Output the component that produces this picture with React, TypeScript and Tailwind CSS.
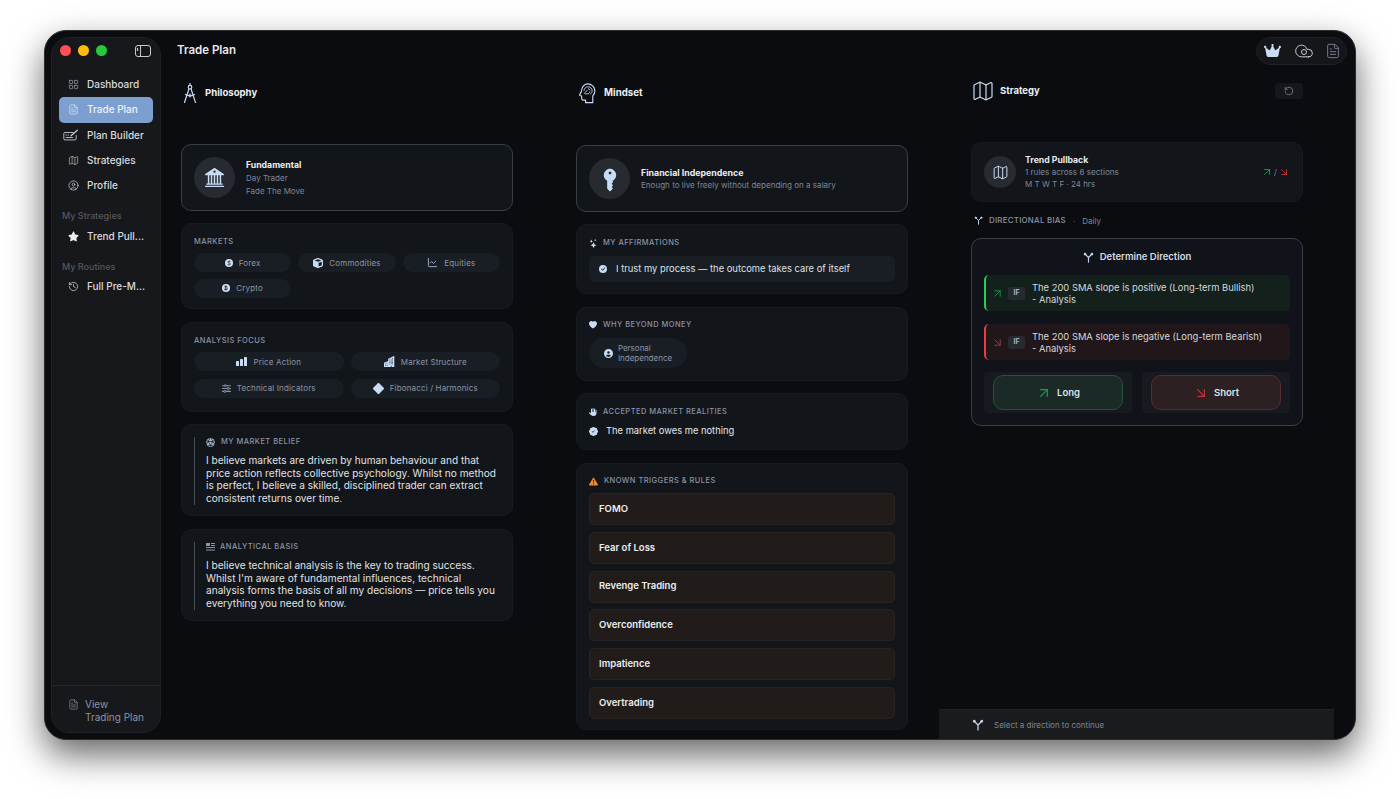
import { ReactNode } from 'react';
import {
  ArrowDownRight,
  ArrowUpRight,
  ChartLine,
  CircleUser,
  Cloud,
  FileText,
  History,
  LayoutGrid,
  Map as MapIcon,
  RotateCcw,
} from 'lucide-react';
import {
  BsBank2,
  BsBuildingsFill,
  BsCheckCircleFill,
  BsCurrencyBitcoin,
  BsCurrencyDollar,
  BsDiamondFill,
  BsExclamationTriangleFill,
  BsHeartFill,
  BsPatchCheckFill,
  BsStars,
} from 'react-icons/bs';
import { FaCircleUser, FaCrown, FaCube, FaDiceD20, FaHand, FaKey, FaSliders, FaStar } from 'react-icons/fa6';

const ICE = '#c9dcf5';

const BranchIcon = ({ size = 12, color = '#c3d2e6' }: { size?: number; color?: string }) => (
  <svg width={size} height={size} viewBox="0 0 24 24" fill="none" stroke={color} strokeWidth="2.6" strokeLinecap="round">
    <path d="M12 22V12M12 12L5 5M12 12l7-7" />
    <circle cx="4.5" cy="4.5" r="1.6" fill={color} />
    <circle cx="19.5" cy="4.5" r="1.6" fill={color} />
  </svg>
);

const CompassIcon = () => (
  <svg width="14" height="20" viewBox="0 0 14 20" fill="none" stroke={ICE} strokeWidth="1.2" strokeLinecap="round" strokeLinejoin="round">
    <path d="M7 0.5v2" />
    <circle cx="7" cy="4.2" r="1.8" />
    <path d="M6 5.8L1.5 19.5M8 5.8l4.5 13.8" />
    <path d="M6.3 11v3M7.7 11v3" strokeWidth="0.8" />
    <path d="M2.5 11.5c2.5 1.5 6.5 1.5 9 0" />
  </svg>
);

const HeadIcon = () => (
  <svg width="18" height="21" viewBox="0 0 20 24" fill="none" stroke={ICE} strokeWidth="1.3" strokeLinecap="round" strokeLinejoin="round">
    <path d="M10.5 1C15.5 1 19 4.4 19 9c0 2.7-1.2 4.2-2.4 5.7V22.5H8.4v-3H5.8c-1.2 0-1.9-.8-1.9-1.9v-2.7L2 14.3c-.5-.2-.6-.6-.4-1l2-3.4C3.8 5 6.6 1 10.5 1z" />
    <path d="M6.5 8.5c.3-2.5 2.4-4.3 4.7-4.2 2.6.1 4.9 2 4.7 4.8-.1 1.5-.8 2.6-1.8 3.4M8 10.5c1-.2 1.8-1 2-2M10.5 12.5c1.4 0 2.5-.9 2.7-2.3M11.5 6.5c.9.2 1.6.8 1.8 1.6M6.7 11.5c.8.8 1.8 1.2 2.8 1" strokeWidth="1" />
  </svg>
);

const PlanBuilderIcon = () => (
  <svg width="16" height="13" viewBox="0 0 16 13" fill="none" stroke="#c4c7cc" strokeWidth="0.9" strokeLinecap="round" strokeLinejoin="round">
    <path d="M10 3.5H2a1.2 1.2 0 0 0-1.2 1.2v5A1.2 1.2 0 0 0 2 10.9h10a1.2 1.2 0 0 0 1.2-1.2V6.5" />
    <path d="M3 6h.5M5 6h.5M3 8.5h6.5" />
    <path d="M8 6.8l6.3-5.6" strokeWidth="1.3" />
  </svg>
);

const BasisIcon = () => (
  <svg width="9" height="8" viewBox="0 0 9 8" fill="#8c95a5">
    <rect x="0" y="0" width="4" height="3" />
    <rect x="5" y="0" width="4" height="1" />
    <rect x="5" y="2" width="4" height="1" />
    <rect x="0" y="4" width="9" height="1" />
    <rect x="0" y="6.5" width="9" height="1" />
  </svg>
);

const BarsIcon = () => (
  <svg width="11" height="9" viewBox="0 0 11 9" fill={ICE}>
    <rect x="0" y="4" width="3" height="5" rx="0.5" />
    <rect x="4" y="2" width="3" height="7" rx="0.5" />
    <rect x="8" y="0" width="3" height="9" rx="0.5" />
  </svg>
);

const CoinIcon = ({ children }: { children: ReactNode }) => (
  <span className="flex h-[8px] w-[8px] items-center justify-center rounded-full bg-[#cfe0f7] text-[#1a1e25]">{children}</span>
);

const Card = ({ children, className = '' }: { children: ReactNode; className?: string }) => (
  <div className={`rounded-[10px] border border-[#171a1f] bg-[#12151a] ${className}`}>{children}</div>
);

const Label = ({ children, className = '' }: { children: ReactNode; className?: string }) => (
  <div className={`text-[7.5px] font-medium uppercase leading-[10px] tracking-[0.45px] text-[#8b93a5] ${className}`}>{children}</div>
);

const Pill = ({ icon, text, className = '' }: { icon: ReactNode; text: string; className?: string }) => (
  <div className={`flex h-[19px] items-center justify-center gap-[6px] rounded-full bg-[#191d24] text-[8px] tracking-[0.15px] text-[#8d95a5] ${className}`}>
    {icon}
    <span>{text}</span>
  </div>
);

const NavItem = ({ icon, text, active = false }: { icon: ReactNode; text: string; active?: boolean }) => (
  <div className={`mx-[7px] flex h-[25.25px] items-center gap-[8px] rounded-[5px] text-[10px] font-medium ${active ? 'bg-[#7c9fd0] text-[#eef3fa]' : 'text-[#d9dbdf]'}`}>
    <span className="flex w-[20px] justify-end">{icon}</span>
    <span>{text}</span>
  </div>
);

const Sidebar = () => (
  <aside className="mb-[6px] ml-[6px] mt-[6px] flex w-[110px] flex-col rounded-[18px] border border-[#1f2124] bg-[#17181b]">
    <div className="flex h-[25px] items-center pl-[8px] pr-[9px]">
      <div className="h-[11px] w-[11px] rounded-full bg-[#ff4f57]" />
      <div className="ml-[7px] h-[11px] w-[11px] rounded-full bg-[#fdbc0f]" />
      <div className="ml-[7px] h-[11px] w-[11px] rounded-full bg-[#28c840]" />
      <svg className="ml-auto" width="16" height="12" viewBox="0 0 16 12" fill="none" stroke="#c9cbcf" strokeWidth="1">
        <rect x="0.5" y="0.5" width="15" height="11" rx="2.5" />
        <path d="M5.5 0.5v11" />
        <path d="M2.5 3v3" strokeWidth="1.2" />
      </svg>
    </div>
    <div className="mt-[9px] flex flex-col">
      <NavItem icon={<LayoutGrid size={11} strokeWidth={1.3} color="#b5b8bd" />} text="Dashboard" />
      <NavItem active icon={<FileText size={11} strokeWidth={1.4} color="#e4ecf7" />} text="Trade Plan" />
      <NavItem icon={<PlanBuilderIcon />} text="Plan Builder" />
      <NavItem icon={<MapIcon size={11} strokeWidth={1.4} color="#c4c7cc" />} text="Strategies" />
      <NavItem icon={<CircleUser size={11} strokeWidth={1.5} color="#d4d6da" />} text="Profile" />
    </div>
    <div className="ml-[10px] mt-[13px] text-[9px] font-medium leading-[10px] text-[#54575c]">My Strategies</div>
    <div className="mt-[3px]">
      <NavItem icon={<FaStar size={11} color="#eceef1" />} text="Trend Pull..." />
    </div>
    <div className="ml-[10px] mt-[12px] text-[9px] font-medium leading-[10px] text-[#54575c]">My Routines</div>
    <div className="mt-[2px]">
      <NavItem icon={<History size={11} strokeWidth={1.6} color="#d4d6da" />} text="Full Pre-M..." />
    </div>
    <div className="mt-auto flex h-[47px] gap-[6px] border-t border-[#26282b] pl-[16px] pt-[12px]">
      <FileText size={11} strokeWidth={1.3} color="#98a2b4" className="mt-[1px]" />
      <div className="text-[10px] leading-[13px] text-[#8c95a6]">
        View
        <br />
        Trading Plan
      </div>
    </div>
  </aside>
);

const Belief = ({ icon, title, gap, children }: { icon: ReactNode; title: string; gap: string; children: ReactNode }) => (
  <Card className="px-[12px] pb-[10px] pt-[12px]">
    <div className="flex border-l border-[#474c55] pl-[11px]">
      <div>
        <div className={`flex h-[10px] items-center ${gap}`}>
          {icon}
          <Label>{title}</Label>
        </div>
        <p className="mt-[7px] text-[10.1px] font-normal leading-[12.7px] text-[#e0e2e6]">{children}</p>
      </div>
    </div>
  </Card>
);

const PhilosophyColumn = () => (
  <div className="ml-[20px] w-[332px]">
    <div className="mt-[16px] flex h-[24px] items-center">
      <span className="ml-[2px]"><CompassIcon /></span>
      <span className="ml-[8px] text-[9.6px] font-bold text-[#eceef1]">Philosophy</span>
    </div>
    <div className="mt-[39px] flex h-[67px] items-center gap-[11px] rounded-[10px] border border-[#3a3f47] bg-[#12151a] pl-[12px]">
      <div className="flex h-[41px] w-[41px] items-center justify-center rounded-full bg-[#272a30]">
        <BsBank2 size={19} color={ICE} />
      </div>
      <div className="pt-[1px]">
        <div className="text-[8.7px] font-bold leading-[13px] text-[#eceef1]">Fundamental</div>
        <div className="text-[8px] leading-[13px] text-[#7e8697]">Day Trader</div>
        <div className="text-[8px] leading-[13px] text-[#7e8697]">Fade The Move</div>
      </div>
    </div>
    <Card className="mt-[12px] h-[86px] px-[12px] pt-[13px]">
      <Label>Markets</Label>
      <div className="mt-[6px] grid grid-cols-3 gap-x-[7px] gap-y-[6.5px]">
        <Pill icon={<CoinIcon><BsCurrencyDollar size={6} /></CoinIcon>} text="Forex" />
        <Pill icon={<FaCube size={10} color={ICE} />} text="Commodities" />
        <Pill icon={<ChartLine size={11} strokeWidth={1.6} color={ICE} />} text="Equities" />
        <Pill icon={<CoinIcon><BsCurrencyBitcoin size={6} /></CoinIcon>} text="Crypto" />
      </div>
    </Card>
    <Card className="mt-[13px] h-[90px] px-[12px] pt-[13px]">
      <Label>Analysis Focus</Label>
      <div className="mt-[6px] grid grid-cols-2 gap-x-[7px] gap-y-[7.5px]">
        <Pill icon={<BarsIcon />} text="Price Action" />
        <Pill icon={<BsBuildingsFill size={11} color={ICE} />} text="Market Structure" />
        <Pill icon={<FaSliders size={9} color="#8c95a5" />} text="Technical Indicators" />
        <Pill icon={<BsDiamondFill size={11} color={ICE} />} text="Fibonacci / Harmonics" />
      </div>
    </Card>
    <div className="mt-[12px]">
      <Belief icon={<FaDiceD20 size={9} color="#a9b8cf" />} gap="gap-[6px]" title="My Market Belief">
        I believe markets are driven by human behaviour and that price action reflects collective psychology. Whilst no
        method is perfect, I believe a skilled, disciplined trader can extract consistent returns over time.
      </Belief>
    </div>
    <div className="mt-[13px]">
      <Belief icon={<BasisIcon />} gap="gap-[5px]" title="Analytical Basis">
        I believe technical analysis is the key to trading success. Whilst I'm aware of fundamental influences, technical
        analysis forms the basis of all my decisions — price tells you everything you need to know.
      </Belief>
    </div>
  </div>
);

const triggers = ['FOMO', 'Fear of Loss', 'Revenge Trading', 'Overconfidence', 'Impatience', 'Overtrading'];

const MindsetColumn = () => (
  <div className="ml-[63px] w-[332px]">
    <div className="mt-[16px] flex h-[24px] items-center">
      <span className="ml-[2px]"><HeadIcon /></span>
      <span className="ml-[8px] text-[9.7px] font-bold text-[#eceef1]">Mindset</span>
    </div>
    <div className="mt-[40px] flex h-[67px] items-center gap-[11px] rounded-[10px] border border-[#3a3f47] bg-[#12151a] pl-[12px]">
      <div className="flex h-[41px] w-[41px] items-center justify-center rounded-full bg-[#272a30]">
        <FaKey size={18} color={ICE} className="rotate-[-45deg]" />
      </div>
      <div>
        <div className="text-[8.8px] font-bold leading-[13px] text-[#eceef1]">Financial Independence</div>
        <div className="text-[8.05px] leading-[13px] text-[#7e8697]">Enough to live freely without depending on a salary</div>
      </div>
    </div>
    <Card className="mt-[12px] h-[70px] px-[12px] pt-[13px]">
      <div className="flex items-center gap-[5px]">
        <BsStars size={9} color={ICE} />
        <Label>My Affirmations</Label>
      </div>
      <div className="mt-[8px] flex h-[26px] items-center gap-[9px] rounded-[6px] bg-[#191d24] pl-[10px] text-[9.4px] text-[#dfe1e5]">
        <BsCheckCircleFill size={8} color={ICE} />
        <span>I trust my process — the outcome takes care of itself</span>
      </div>
    </Card>
    <Card className="mt-[13px] h-[74px] px-[12px] pt-[12px]">
      <div className="flex items-center gap-[6px]">
        <BsHeartFill size={8} color={ICE} />
        <Label>Why Beyond Money</Label>
      </div>
      <div className="mt-[8px] flex h-[30px] w-[98px] items-center justify-center gap-[5px] rounded-full bg-[#191d24] text-[8px] leading-[10px] text-[#8d95a5]">
        <FaCircleUser size={9} color={ICE} />
        <span>
          Personal
          <br />
          Independence
        </span>
      </div>
    </Card>
    <Card className="mt-[12px] h-[57px] px-[12px] pt-[13px]">
      <div className="flex items-center gap-[6px]">
        <FaHand size={8} color={ICE} />
        <Label>Accepted Market Realities</Label>
      </div>
      <div className="mt-[7px] flex items-center gap-[8px] text-[9.35px] text-[#e6e8eb]">
        <BsPatchCheckFill size={9} color={ICE} />
        <span>The market owes me nothing</span>
      </div>
    </Card>
    <Card className="mt-[13px] h-[267px] px-[12px] pt-[12px]">
      <div className="flex items-center gap-[6px]">
        <BsExclamationTriangleFill size={9} color="#f08a2c" />
        <Label>Known Triggers &amp; Rules</Label>
      </div>
      <div className="mt-[7px] flex flex-col gap-[6.8px]">
        {triggers.map((t) => (
          <div key={t} className="flex h-[32px] items-center rounded-[5px] border border-[#2a2420] bg-[#211c19] pl-[9px] text-[9.5px] font-semibold text-[#eceef1]">
            {t}
          </div>
        ))}
      </div>
    </Card>
  </div>
);

const Rule = ({ up, children }: { up: boolean; children: ReactNode }) => (
  <div className={`flex h-[36px] items-center rounded-[5px] border-l-[2px] ${up ? 'border-[#27d05c] bg-[#13201c]' : 'border-[#ee3b3f] bg-[#21171a]'}`}>
    {up ? (
      <ArrowUpRight size={13} strokeWidth={1.8} color="#1f8a4a" className="ml-[5px]" />
    ) : (
      <ArrowDownRight size={13} strokeWidth={1.8} color="#a8323a" className="ml-[5px]" />
    )}
    <span className="ml-[4px] flex h-[13px] w-[17px] items-center justify-center rounded-[3px] bg-[#272b31] text-[7px] font-bold text-[#a9b3c2]">IF</span>
    <span className="ml-[7px] pt-[1px] text-[9.4px] leading-[12px] text-[#d5d8dc]">{children}</span>
  </div>
);

const StrategyColumn = () => (
  <div className="ml-[31px] flex w-[395px] flex-col">
    <div className="flex-1 pl-[32px] pr-[31px]">
      <div className="mt-[15px] flex h-[22px] items-center">
        <MapIcon size={24} strokeWidth={1.2} color={ICE} />
        <span className="ml-[5px] pt-[1px] text-[9.5px] font-bold text-[#eceef1]">Strategy</span>
        <span className="ml-auto flex h-[16px] w-[28px] items-center justify-center rounded-[4px] bg-[#14171b]">
          <RotateCcw size={10} color="#777e8a" />
        </span>
      </div>
      <Card className="mt-[40px] flex h-[60px] items-center pl-[12px] pr-[12px]">
        <div className="flex h-[32px] w-[32px] items-center justify-center rounded-full bg-[#272a30]">
          <MapIcon size={17} strokeWidth={1.4} color={ICE} />
        </div>
        <div className="ml-[9px]">
          <div className="text-[8.7px] font-bold leading-[12px] text-[#e8eaed]">Trend Pullback</div>
          <div className="text-[8.1px] leading-[12px] text-[#7e8697]">1 rules across 6 sections</div>
          <div className="text-[8px] leading-[12px] text-[#7e8697]">M T W T F · 24 hrs</div>
        </div>
        <div className="ml-auto flex items-center gap-[1px] text-[8px] text-[#7e8697]">
          <ArrowUpRight size={12} strokeWidth={1.8} color="#1f9a4f" />
          <span>/</span>
          <ArrowDownRight size={12} strokeWidth={1.8} color="#c23339" />
        </div>
      </Card>
      <div className="mt-[12px] flex h-[12px] items-center pl-[3px] pt-[1px]">
        <BranchIcon size={9} />
        <span className="ml-[6px] text-[7.9px] font-medium uppercase tracking-[0.25px] text-[#8b93a5]">Directional Bias</span>
        <span className="ml-[7px] text-[8px] text-[#5c6270]">·</span>
        <span className="ml-[7px] text-[8px] text-[#7e8697]">Daily</span>
      </div>
      <div className="mt-[12px] h-[188px] rounded-[10px] border border-[#3a3f47] bg-[#10131a] px-[12px] pt-[10px]">
        <div className="flex h-[16px] items-center justify-center gap-[6px]">
          <BranchIcon size={11} />
          <span className="text-[9.5px] font-semibold text-[#d8dbe0]">Determine Direction</span>
        </div>
        <div className="mt-[10px] flex flex-col gap-[13px]">
          <Rule up>
            The 200 SMA slope is positive (Long-term Bullish)
            <br />- Analysis
          </Rule>
          <Rule up={false}>
            The 200 SMA slope is negative (Long-term Bearish)
            <br />- Analysis
          </Rule>
        </div>
        <div className="mt-[12px] grid grid-cols-2 gap-[10px]">
          <div className="flex h-[41px] items-center justify-center rounded-[4px] bg-[#171a1f]">
            <div className="flex h-[35px] w-[130px] items-center justify-center gap-[5px] rounded-[10px] border border-[#24543a] bg-[#1b2a27] pt-[1px] text-[9.5px] font-semibold text-[#dfe3e6]">
              <ArrowUpRight size={16} strokeWidth={1.8} color="#1f9a4f" />
              Long
            </div>
          </div>
          <div className="flex h-[41px] items-center justify-center rounded-[4px] bg-[#171a1f]">
            <div className="flex h-[35px] w-[130px] items-center justify-center gap-[5px] rounded-[10px] border border-[#5c2a2e] bg-[#2c2023] pt-[1px] text-[9.5px] font-semibold text-[#dfe3e6]">
              <ArrowDownRight size={16} strokeWidth={1.8} color="#c23339" />
              Short
            </div>
          </div>
        </div>
      </div>
    </div>
    <div className="flex h-[30px] items-center border-t border-[#222427] bg-[#191b1d] pl-[33px]">
      <BranchIcon size={12} />
      <span className="ml-[10px] text-[8px] text-[#7e8697]">Select a direction to continue</span>
    </div>
  </div>
);

export default function App() {
  return (
    <div className="h-[799px] overflow-hidden bg-white pl-[44px] pt-[30px] font-[family-name:Inter,sans-serif]">
      <div className="flex h-[710px] w-[1312px] overflow-hidden rounded-[22px] border border-[#2a2c30] bg-[#0a0c10] shadow-[0_15px_35px_rgba(0,0,0,0.6)]">
        <Sidebar />
        <main className="flex min-w-0 flex-1 flex-col">
          <div className="mt-[5px] flex h-[29px] items-center pl-[16px] pr-[8px]">
            <span className="text-[11.5px] font-semibold text-[#e8eaed]">Trade Plan</span>
            <div className="ml-auto flex h-[28px] w-[91px] items-center rounded-full border border-[#1d2024] bg-[#14161a] pl-[7px]">
              <FaCrown size={17} color={ICE} />
              <span className="relative ml-[13px] flex">
                <Cloud size={20} strokeWidth={1.2} color="#c9cdd3" />
                <span className="absolute left-[7px] top-[8px] h-[6px] w-[6px] rounded-full border border-[#c9cdd3]" />
              </span>
              <FileText size={16} strokeWidth={1.3} color="#7f8a9c" className="ml-[11px]" />
            </div>
          </div>
          <div className="flex min-h-0 flex-1">
            <PhilosophyColumn />
            <MindsetColumn />
            <StrategyColumn />
          </div>
        </main>
      </div>
    </div>
  );
}
